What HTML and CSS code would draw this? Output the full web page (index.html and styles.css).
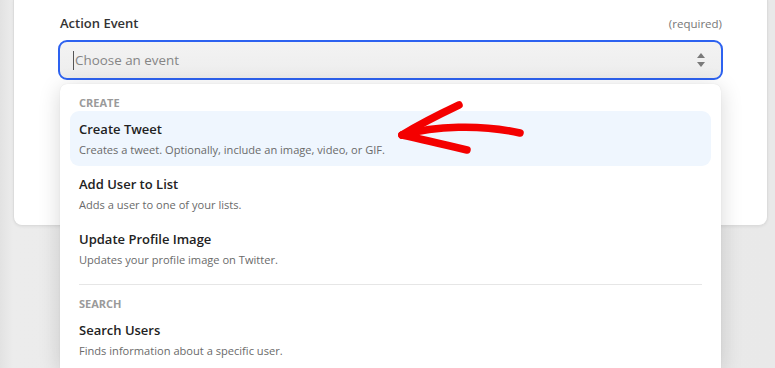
FILE: index.html
```html
<!DOCTYPE html>
<html lang="en">
<head>
    <meta charset="UTF-8">
    <meta name="viewport" content="width=device-width, initial-scale=1.0">
    <title>Action Event</title>
    <link rel="stylesheet" href="styles.css">
</head>
<body>
    <div class="card">
        <div class="field">
            <div class="field-label">
                <span class="label">Action Event</span>
                <span class="required">(required)</span>
            </div>
            <div class="select">
                <span class="caret"></span>
                <span class="placeholder">Choose an event</span>
                <svg class="updown" width="10" height="16" viewBox="0 0 10 16">
                    <path d="M5 1 L9 6 L1 6 Z" fill="#7a7a7a"/>
                    <path d="M1 10 L9 10 L5 15 Z" fill="#7a7a7a"/>
                </svg>
            </div>

            <div class="dropdown">
                <div class="group-title">CREATE</div>
                <div class="option active">
                    <div class="option-title">Create Tweet</div>
                    <div class="option-desc">Creates a tweet. Optionally, include an image, video, or GIF.</div>
                </div>
                <div class="option">
                    <div class="option-title">Add User to List</div>
                    <div class="option-desc">Adds a user to one of your lists.</div>
                </div>
                <div class="option">
                    <div class="option-title">Update Profile Image</div>
                    <div class="option-desc">Updates your profile image on Twitter.</div>
                </div>
                <hr class="divider">
                <div class="group-title">SEARCH</div>
                <div class="option">
                    <div class="option-title">Search Users</div>
                    <div class="option-desc">Finds information about a specific user.</div>
                </div>
            </div>
        </div>
    </div>

    <!-- hand drawn pointer -->
    <svg class="pointer" width="140" height="70" viewBox="0 0 140 70">
        <g fill="none" stroke="#f40000" stroke-width="7.5" stroke-linecap="round" stroke-linejoin="round">
            <path d="M12 40 C 30 29, 50 19, 69 10"/>
            <path d="M12 40 C 35 45, 56 50, 77 55"/>
            <path d="M12 40 C 45 31, 90 29, 130 38"/>
        </g>
    </svg>
</body>
</html>
```

FILE: styles.css
```css
body {
    margin: 0;
    height: 368px;
    overflow: hidden;
    position: relative;
    font-family: "Open Sans", Arial, sans-serif;
    background: linear-gradient(to right, #e2e2e2 0, #ececec 13px, #e9e9e9 100%);
    color: #222;
}
.card {
    margin: -1px 7px 0 13px;
    height: 227px;
    box-sizing: border-box;
    padding: 15px 44px 0 44px;
    background: #fff;
    border: 1px solid #dcdcdc;
    border-top: none;
    border-radius: 0 0 9px 9px;
    box-shadow: 0 1px 3px rgba(0, 0, 0, 0.06);
}
.field {
    position: relative;
}
.field-label {
    display: flex;
    justify-content: space-between;
    align-items: center;
    height: 18px;
    padding: 0 1px 0 2px;
}
.label {
    font-size: 13px;
    font-weight: 600;
    color: #333;
}
.required {
    font-size: 11.5px;
    color: #777;
}
.select {
    margin-top: 8px;
    height: 40px;
    box-sizing: border-box;
    border: 2px solid #2d62f0;
    border-radius: 9px;
    background: linear-gradient(#f3f3f3, #ededed);
    display: flex;
    align-items: center;
    padding: 0 15px 0 13px;
}
.caret {
    width: 1px;
    height: 19px;
    background: #555;
}
.placeholder {
    flex: 1;
    font-size: 13.4px;
    color: #858585;
    margin-left: 1px;
}
.updown {
    display: block;
}
.dropdown {
    position: absolute;
    top: 70px;
    left: 2px;
    right: 2px;
    height: 284px;
    overflow: hidden;
    background: #fff;
    border-radius: 7px 7px 0 0;
    box-shadow: 0 4px 22px rgba(0, 0, 0, 0.16), 0 0 1px rgba(0, 0, 0, 0.12);
    padding: 12px 10px 0 10px;
    box-sizing: border-box;
}
.group-title {
    font-size: 11px;
    font-weight: 700;
    line-height: 14px;
    color: #9a9a9a;
    padding-left: 9px;
    margin-bottom: 1px;
}
.option {
    height: 55px;
    box-sizing: border-box;
    padding: 9px 9px 0 9px;
    border-radius: 9px;
}
.option.active {
    background: #eff6fe;
}
.option-title {
    font-size: 13px;
    font-weight: 600;
    line-height: 18px;
    color: #222;
}
.option-desc {
    margin-top: 3px;
    font-size: 11.1px;
    line-height: 18px;
    color: #6a6a6a;
}
.divider {
    border: none;
    border-top: 1px solid #e6e6e6;
    margin: 8px 9px 12px 9px;
}
.pointer {
    position: absolute;
    left: 390px;
    top: 95px;
}
```
